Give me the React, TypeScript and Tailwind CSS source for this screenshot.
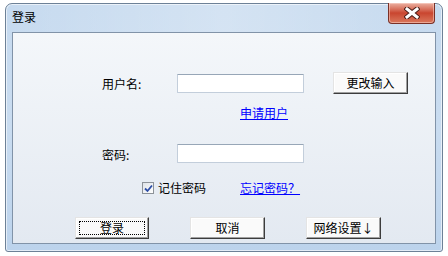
import React from 'react';

const font = { fontFamily: '"Noto Sans CJK SC", "Liberation Sans", sans-serif' };

const Btn = ({ children, className = '', focused = false }: { children: React.ReactNode; className?: string; focused?: boolean }) => (
  <button
    className={`relative h-[22px] border border-t-[#e4e4e4] border-l-[#e4e4e4] border-r-[#3c3c3c] border-b-[#3c3c3c] bg-[#fafafa] shadow-[inset_-1px_-1px_0_#a0a0a0,inset_1px_1px_0_#ffffff] text-[12px] leading-none text-black flex items-center justify-center ${className}`}
  >
    {focused && <span className="absolute inset-[3px] border border-dotted border-black" />}
    {children}
  </button>
);

const Field = () => (
  <div className="w-[127px] h-[19px] bg-white border border-[#c3cedb] border-t-[#97a6b7] rounded-[1px]" />
);

const CloseButton = () => (
  <div className="w-[47px] h-[21px] -mt-px rounded-b-[4px] border border-t-0 border-[#7a3026] bg-gradient-to-b from-[#eab0a2] via-[#c9452f] to-[#d9775c] shadow-[inset_0_0_0_1px_rgba(255,220,210,0.5)] flex items-center justify-center">
    <svg width="16" height="12" viewBox="0 0 16 12">
      <path d="M3 2 L13 10 M13 2 L3 10" stroke="#4a1e18" strokeWidth="5" strokeLinecap="square" />
      <path d="M3 2 L13 10 M13 2 L3 10" stroke="#ffffff" strokeWidth="3" strokeLinecap="square" />
    </svg>
  </div>
);

const Checkbox = () => (
  <span className="w-[12px] h-[12px] border border-[#8d9399] bg-gradient-to-br from-[#dfe3e8] to-[#ffffff] flex items-center justify-center">
    <svg width="9" height="9" viewBox="0 0 9 9">
      <path d="M1 4.5 L3.5 7 L8 1.5" fill="none" stroke="#2d4ea6" strokeWidth="1.8" />
    </svg>
  </span>
);

export default function App() {
  return (
    <div className="w-[448px] h-[256px] bg-white overflow-hidden pt-[3px] pl-[5px]" style={font}>
      <div className="w-[438px] h-[249px] flex flex-col rounded-t-[7px] rounded-b-[3px] border border-[#6d8197] bg-gradient-to-b from-[#c6daef] via-[#c9dcf0] to-[#bcd3ec] shadow-[inset_0_0_0_1px_rgba(255,255,255,0.6)]">
        <div className="h-[28px] flex items-start justify-between bg-gradient-to-r from-transparent via-[rgba(255,255,255,0.25)] to-transparent">
          <span className="pl-[6px] pt-[6px] text-[12px] leading-[14px] text-black">登录</span>
          <div className="mr-[7px]">
            <CloseButton />
          </div>
        </div>
        <div className="flex-1 mx-[6px] mb-[7px] border border-[#8193a8] bg-gradient-to-b from-[#f4f7fa] to-[#e3e9f1] flex flex-col text-[12px] text-black">
          <div className="mt-[39px] h-[22px] flex items-center">
            <span className="ml-[89px] w-[75px] pt-[2px]">用户名:</span>
            <Field />
            <Btn className="ml-[29px] w-[75px]">更改输入</Btn>
          </div>
          <div className="mt-[11px] h-[16px] flex items-center">
            <a className="ml-[227px] text-[#0000ff] underline leading-none">申请用户</a>
          </div>
          <div className="mt-[23px] h-[19px] flex items-center">
            <span className="ml-[89px] w-[75px] pt-[2px]">密码:</span>
            <Field />
          </div>
          <div className="mt-[17px] h-[16px] flex items-center">
            <span className="ml-[129px]">
              <Checkbox />
            </span>
            <span className="ml-[4px] leading-none">记住密码</span>
            <a className="ml-[34px] text-[#0000ff] underline leading-none">忘记密码？</a>
          </div>
          <div className="mt-[21px] flex items-center">
            <Btn focused className="ml-[62px] w-[74px]">登录</Btn>
            <Btn className="ml-[41px] w-[75px]">取消</Btn>
            <Btn className="ml-[41px] w-[75px]">网络设置↓</Btn>
          </div>
        </div>
      </div>
    </div>
  );
}
